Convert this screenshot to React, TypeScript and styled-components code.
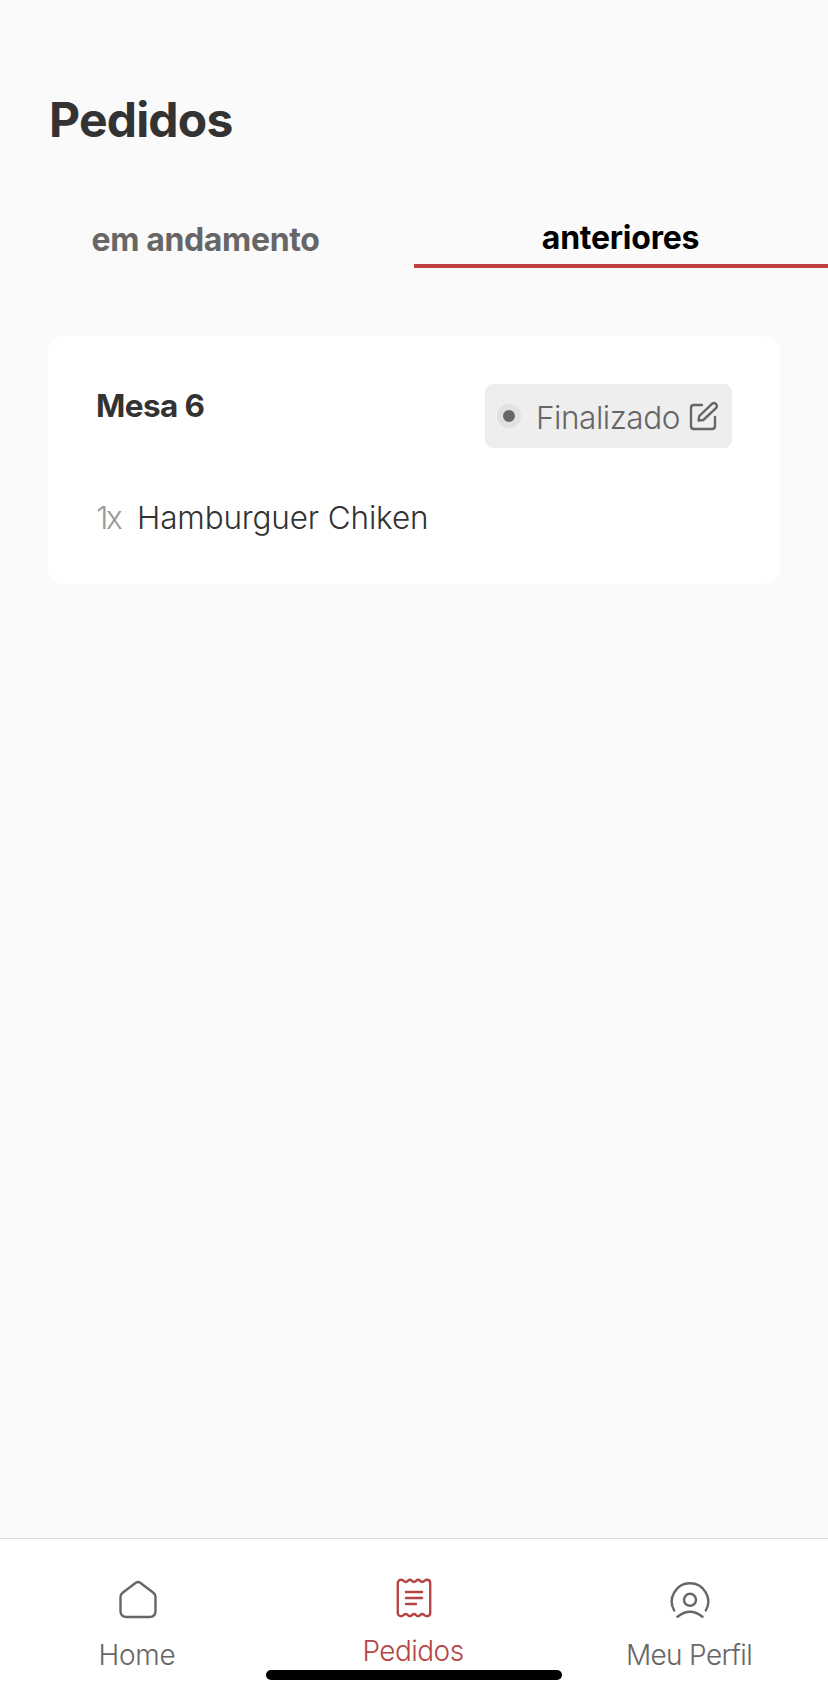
import React from "react";
import styled, { createGlobalStyle } from "styled-components";

const GlobalStyle = createGlobalStyle`
  * { box-sizing: border-box; }
  body { margin: 0; background: #fafafa; font-family: Inter, "Liberation Sans", sans-serif; }
  button { font: inherit; border: 0; background: none; padding: 0; }
`;

const Screen = styled.div`
  display: flex;
  flex-direction: column;
  height: 1696px;
  background: #fafafa;
  color: #333;
`;

const Title = styled.h1`
  margin: 0;
  padding: 91px 48px 0 49px;
  font-size: 48px;
  line-height: 58px;
  font-weight: 700;
  letter-spacing: -0.8px;
`;

const Tabs = styled.div`
  display: flex;
  height: 56px;
  margin-top: 63px;
`;

const Tab = styled.button<{ $active?: boolean; $spacing: number }>`
  flex: 0 0 50%;
  display: flex;
  align-items: center;
  justify-content: center;
  padding-right: ${(p) => (p.$active ? 1 : 3)}px;
  font-size: 32px;
  line-height: 40px;
  font-weight: 700;
  letter-spacing: ${(p) => p.$spacing}px;
  color: ${(p) => (p.$active ? "#000" : "#666")};
  border-bottom: ${(p) => (p.$active ? "4px solid #be4040" : "0")};
`;

const Card = styled.article`
  display: flex;
  flex-direction: column;
  justify-content: space-between;
  height: 248px;
  margin: 68px 48px 0;
  padding: 48px 48px 46px;
  border-radius: 16px;
  background: #fff;
`;

const CardHeader = styled.header`
  display: flex;
  justify-content: space-between;
  align-items: flex-start;
`;

const TableName = styled.h2`
  margin: 0;
  padding-top: 2px;
  font-size: 31.5px;
  line-height: 40px;
  font-weight: 700;
  letter-spacing: -0.6px;
`;

const Status = styled.div`
  display: flex;
  align-items: center;
  width: 247px;
  height: 64px;
  padding: 0 12px;
  border-radius: 8px;
  background: #eee;
  color: #666;
`;

const Dot = styled.span`
  width: 24px;
  height: 24px;
  border: 6px solid #e1e1e1;
  border-radius: 50%;
  background: #666;
`;

const StatusText = styled.span`
  width: 166px;
  padding: 4px 0 0 15px;
  font-size: 31.5px;
  line-height: 40px;
  font-weight: 300;
  letter-spacing: -0.45px;
  white-space: nowrap;
`;

const Item = styled.div`
  display: flex;
  font-size: 31.5px;
  line-height: 40px;
  font-weight: 300;
  white-space: nowrap;
`;

const Quantity = styled.span`
  width: 41px;
  color: #999;
  letter-spacing: -2.4px;
`;

const ItemName = styled.span`
  letter-spacing: -0.15px;
`;

const Nav = styled.nav`
  position: relative;
  display: flex;
  height: 158px;
  margin-top: auto;
  border-top: 1px solid #d9d9d9;
  background: #fff;
`;

const NavItem = styled.button<{ $active?: boolean; $spacing: number }>`
  flex: 1;
  display: flex;
  flex-direction: column;
  align-items: center;
  padding-top: ${(p) => (p.$active ? 37 : 40)}px;
  gap: ${(p) => (p.$active ? 14 : 15)}px;
  color: ${(p) => (p.$active ? "#b54545" : "#666")};
  font-size: 28px;
  line-height: 34px;
  font-weight: 300;
  letter-spacing: ${(p) => p.$spacing}px;
`;

const NavLabel = styled.span`
  padding-right: 2px;
`;

const Icon = styled.svg`
  display: block;
  flex-shrink: 0;
  fill: none;
  stroke: currentColor;
  stroke-width: 2.4;
  stroke-linecap: round;
  stroke-linejoin: round;
`;

const EditIcon = () => (
  <Icon width="32" height="32" viewBox="0 0 32 32">
    <path d="M15 5H7Q4 5 4 8V26Q4 29 7 29H25Q28 29 28 26V17" />
    <path d="M11.5 20.6L12.3 16L25 3.8Q27 2.3 29 4Q30.8 6 29 8.2L16.3 20Z" />
  </Icon>
);

const HomeIcon = () => (
  <Icon width="44" height="44" viewBox="0 0 44 44">
    <path d="M4.5 18Q4.5 15.4 6.6 13.8L19.5 4Q22 2.2 24.5 4L37.4 13.8Q39.5 15.4 39.5 18V32Q39.5 38 33.5 38H10.5Q4.5 38 4.5 32Z" />
  </Icon>
);

const ReceiptIcon = () => (
  <Icon width="44" height="44" viewBox="0 0 44 44">
    <path d="M5.8 7C5.8 5 7.4 3.8 9.2 3.8C11.3 3.8 11.8 6 13.8 6S15.9 3.8 17.9 3.8S20 6 22 6S24.1 3.8 26.1 3.8S28.2 6 30.2 6S32.7 3.8 34.8 3.8C36.6 3.8 38.2 5 38.2 7V37C38.2 39 36.6 40.2 34.8 40.2C32.7 40.2 32.2 38 30.2 38S28.1 40.2 26.1 40.2S24 38 22 38S19.9 40.2 17.9 40.2S15.8 38 13.8 38S11.3 40.2 9.2 40.2C7.4 40.2 5.8 39 5.8 37Z" />
    <path d="M14 16H30M14 22H30M14 28H24" />
  </Icon>
);

const ProfileIcon = () => (
  <Icon width="44" height="44" viewBox="0 0 44 44">
    <path d="M6.2 31.5A18.2 18.2 0 1 1 37.8 31.5" />
    <circle cx="22" cy="20.8" r="6" />
    <path d="M9.5 37.8Q22 27.5 34.5 37.8" />
  </Icon>
);

const HomeIndicator = styled.div`
  position: absolute;
  left: 266px;
  bottom: 16px;
  width: 296px;
  height: 10px;
  border-radius: 5px;
  background: #000;
`;

export default function App() {
  return (
    <>
      <GlobalStyle />
      <Screen>
        <Title>Pedidos</Title>
        <Tabs>
          <Tab $spacing={-0.35}>em andamento</Tab>
          <Tab $active $spacing={-0.25}>anteriores</Tab>
        </Tabs>
        <Card>
          <CardHeader>
            <TableName>Mesa 6</TableName>
            <Status>
              <Dot />
              <StatusText>Finalizado</StatusText>
              <EditIcon />
            </Status>
          </CardHeader>
          <Item>
            <Quantity>1x</Quantity>
            <ItemName>Hamburguer Chiken</ItemName>
          </Item>
        </Card>
        <Nav>
          <NavItem $spacing={-0.3}><HomeIcon /><NavLabel>Home</NavLabel></NavItem>
          <NavItem $active $spacing={-0.55}><ReceiptIcon /><NavLabel>Pedidos</NavLabel></NavItem>
          <NavItem $spacing={-0.65}><ProfileIcon /><NavLabel>Meu Perfil</NavLabel></NavItem>
          <HomeIndicator />
        </Nav>
      </Screen>
    </>
  );
}
